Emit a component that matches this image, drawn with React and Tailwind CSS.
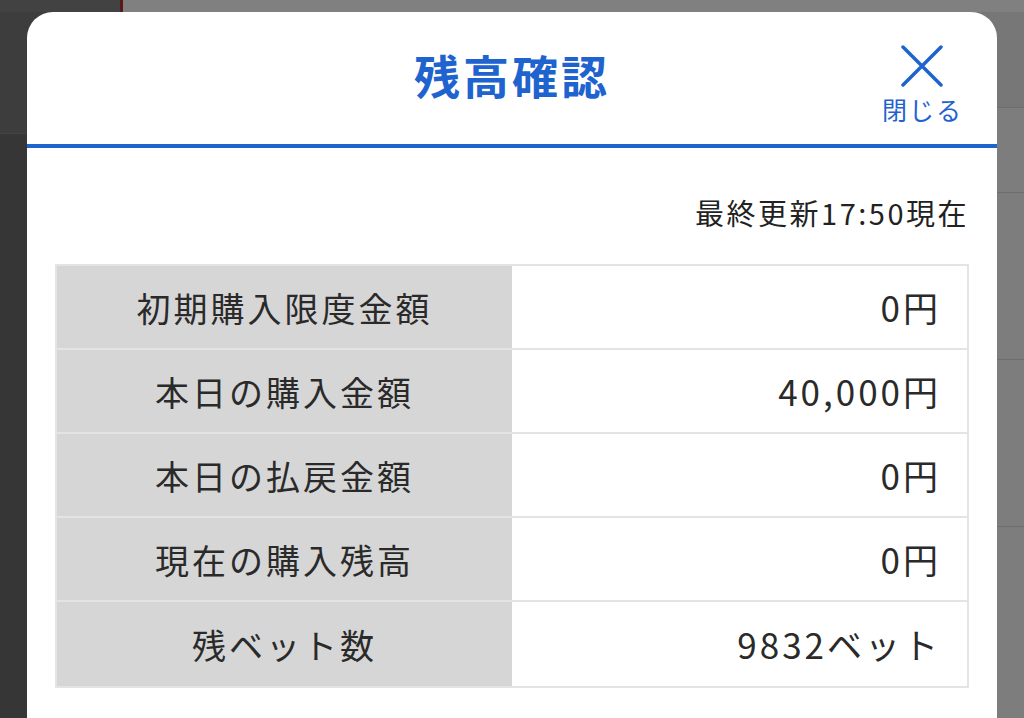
import React from 'react';

const rows = [
  { label: '初期購入限度金額', value: '0円' },
  { label: '本日の購入金額', value: '40,000円' },
  { label: '本日の払戻金額', value: '0円' },
  { label: '現在の購入残高', value: '0円' },
  { label: '残ベット数', value: '9832ベット' },
];

export default function App() {
  return (
    <div
      className="relative w-[1024px] h-[718px] overflow-hidden bg-[#3c3c3c]"
      style={{ fontFamily: '"Noto Sans CJK JP", "Noto Sans", sans-serif' }}
    >
      {/* dimmed page behind the modal */}
      <div className="flex h-full">
        <div className="w-[120px] flex flex-col">
          <div className="h-[12px] bg-[#424242]"></div>
          <div className="h-[122px] bg-[#3d3d3d] border-b border-[#454545]"></div>
          <div className="flex-1 bg-[#363636]"></div>
        </div>
        <div className="w-[3px] h-[12px] bg-[#5a1a1a]"></div>
        <div className="flex-1 flex flex-col bg-[#7d7d7d]">
          <div className="h-[12px] bg-[#808080]"></div>
          <div className="h-[96px] border-b border-[#6e6e6e] bg-[#777777]"></div>
          <div className="h-[85px] border-b border-[#6e6e6e]"></div>
          <div className="h-[167px] border-b border-[#6e6e6e]"></div>
          <div className="h-[167px] border-b border-[#6e6e6e]"></div>
          <div className="flex-1"></div>
        </div>
      </div>

      {/* modal */}
      <div className="absolute left-[27px] top-[12px] w-[970px] h-[740px] bg-white rounded-t-[26px] flex flex-col">
        <div className="relative h-[136px] flex items-center justify-center pb-[8px] border-b-4 border-[#1f63cf]">
          <h1 className="text-[46px] font-bold text-[#1f63cf] tracking-[3px] leading-none">残高確認</h1>
          <button className="absolute right-[34px] top-[33px] flex flex-col items-center text-[#1f63cf]">
            <svg width="42" height="42" viewBox="0 0 42 42" fill="none">
              <path d="M2 2L40 40M40 2L2 40" stroke="#1f63cf" strokeWidth="3.5" strokeLinecap="round" />
            </svg>
            <span className="mt-[10px] text-[25px] leading-none tracking-[2px]">閉じる</span>
          </button>
        </div>

        <div className="px-[28px]">
          <p className="pt-[46px] text-right text-[29px] leading-[36px] tracking-[2.5px] text-[#222222]">最終更新17:50現在</p>

          <div className="mt-[34px] border-2 border-[#e4e4e4]">
            {rows.map((row, idx) => (
              <div
                key={idx}
                className={`grid grid-cols-2 h-[84px] ${idx < rows.length - 1 ? 'border-b-2 border-[#e4e4e4]' : ''}`}
              >
                <div className="flex items-center justify-center bg-[#d6d6d6] text-[34px] text-[#2a2a2a] tracking-[3px]">
                  {row.label}
                </div>
                <div className="flex items-center justify-end pr-[26px] text-[35px] text-[#2a2a2a] tracking-[3px]">
                  {row.value}
                </div>
              </div>
            ))}
          </div>
        </div>
      </div>
    </div>
  );
}
